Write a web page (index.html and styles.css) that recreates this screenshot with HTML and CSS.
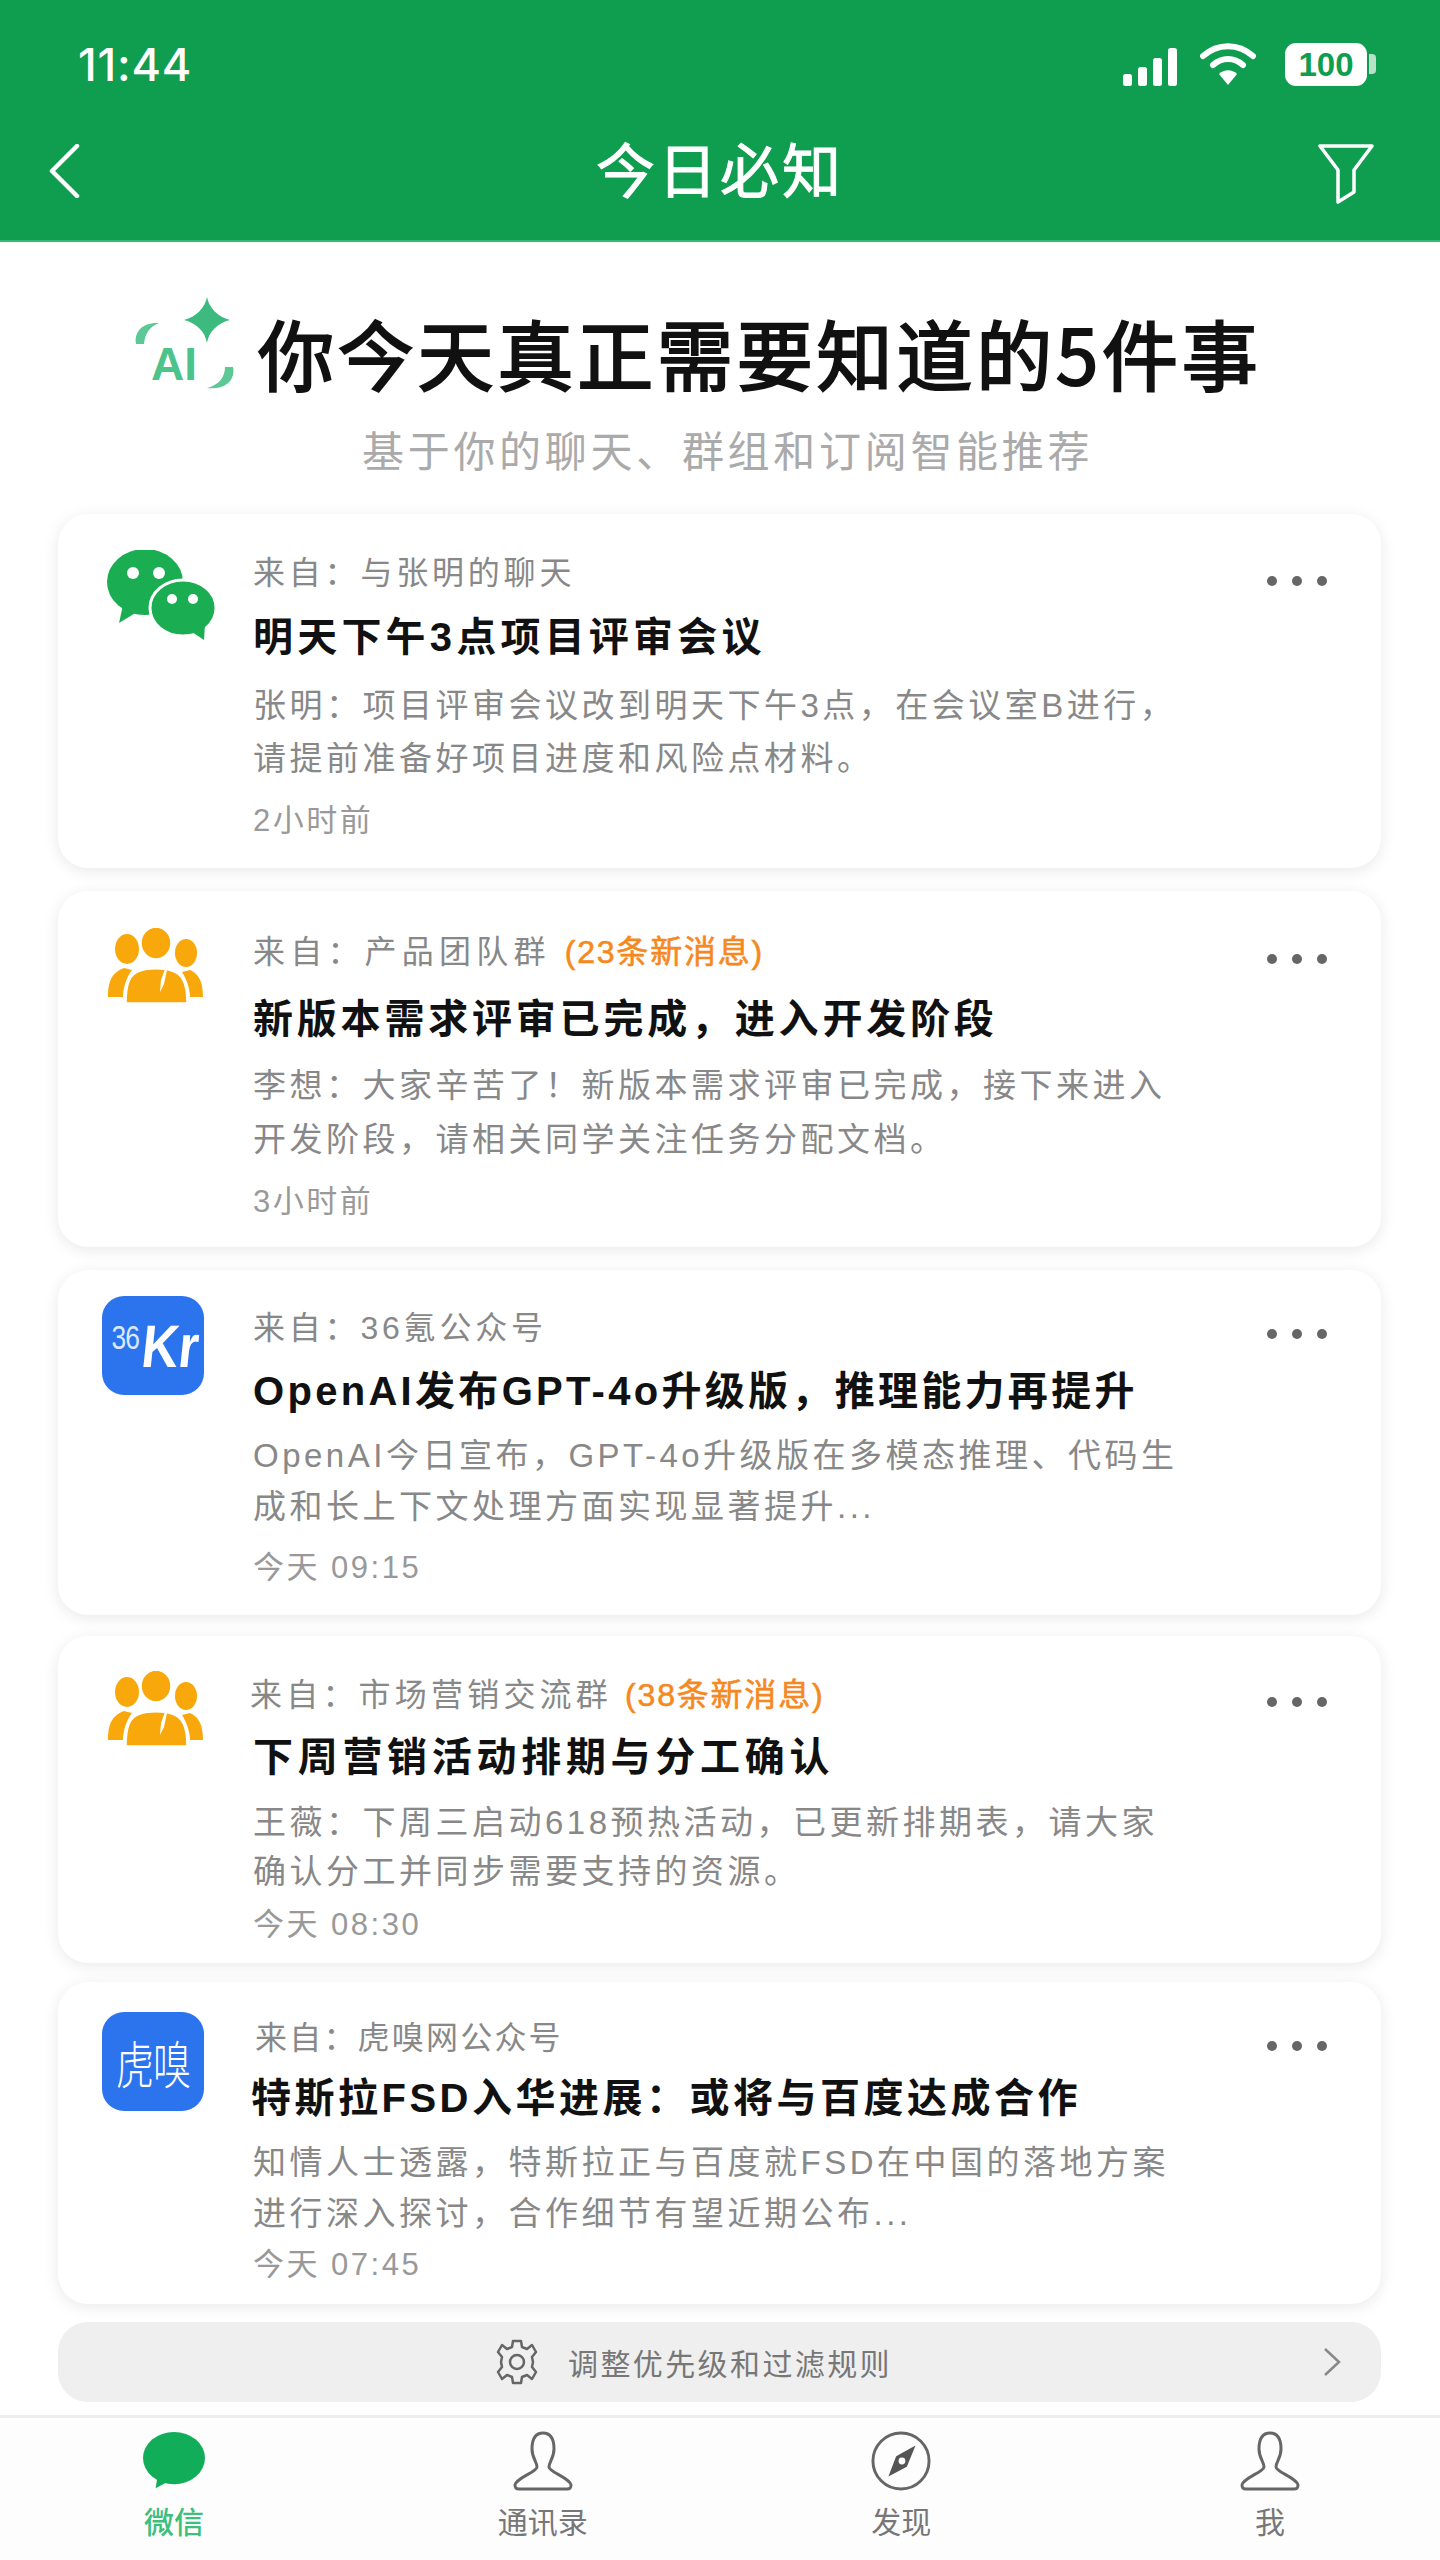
FILE: index.html
```html
<!DOCTYPE html>
<html lang="zh-CN">
<head>
    <meta charset="UTF-8">
    <meta name="viewport" content="width=device-width, initial-scale=1.0">
    <title>今日必知</title>
    <link rel="stylesheet" href="styles.css">
</head>
<body>
    <div class="app">
        <header class="top">
            <div class="status">
                <span class="clock">11:44</span>
                <div class="status-icons">
                    <svg class="signal" viewBox="0 0 56 38"><rect x="0" y="26" width="9" height="12" rx="2.5"/><rect x="15" y="19" width="9" height="19" rx="2.5"/><rect x="30" y="10" width="9" height="28" rx="2.5"/><rect x="45" y="0" width="9" height="38" rx="2.5"/></svg>
                    <svg class="wifi" viewBox="0 0 56 42"><path d="M3 13C18 0 38 0 53 13" fill="none" stroke="#fff" stroke-width="6" stroke-linecap="round"/><path d="M13 22C22 14 34 14 43 22" fill="none" stroke="#fff" stroke-width="6" stroke-linecap="round"/><path d="M28 42L19 31C24 26 32 26 37 31Z" fill="#fff"/></svg>
                    <div class="battery"><span class="battery-level">100</span><span class="battery-nub"></span></div>
                </div>
            </div>
            <nav class="nav">
                <svg class="nav-back" viewBox="0 0 32 54"><path d="M29 2L4 27L29 52" fill="none" stroke="#fff" stroke-width="4.5" stroke-linecap="round" stroke-linejoin="round"/></svg>
                <h1 class="nav-title">今日必知</h1>
                <svg class="nav-filter" viewBox="0 0 56 60"><path d="M2 2H54L36 26V48L20 58V26Z" fill="none" stroke="#fff" stroke-width="3.5" stroke-linejoin="round"/></svg>
            </nav>
        </header>

        <main class="feed">
            <div class="intro">
                <div class="headline">
                    <svg class="ai-mark" viewBox="0 0 100 92">
                        <path d="M73 0C75 11 84 20 96 23C84 26 75 34 73 46C71 34 62 26 50 23C62 20 71 11 73 0Z" fill="#3dbb7e"/>
                        <path d="M2 47C0 34 9 25 25 26C15 30 11 37 10 47Z" fill="#5cc896"/>
                        <path d="M99 70C102 84 90 93 73 91C85 88 91 80 91 70Z" fill="#5cc896"/>
                        <text x="17" y="83" class="ai-text">AI</text>
                    </svg>
                    <h2 class="headline-text">你今天真正需要知道的5件事</h2>
                </div>
                <p class="subhead">基于你的聊天、群组和订阅智能推荐</p>
            </div>

            <article class="card card-one">
                <div class="card-icon">
                    <svg class="icon-wechat" viewBox="0 0 110 90">
                        <path d="M14 73L18 55L32 62Z" fill="#1aad52"/>
                        <ellipse cx="40" cy="32" rx="38" ry="33" fill="#1aad52"/>
                        <circle cx="28" cy="23" r="6" fill="#fff"/>
                        <circle cx="54" cy="23" r="6" fill="#fff"/>
                        <ellipse cx="78" cy="58" rx="33" ry="28" fill="#1aad52" stroke="#fff" stroke-width="3"/>
                        <path d="M99 90L87 82L100 74Z" fill="#1aad52"/>
                        <circle cx="67" cy="49" r="5" fill="#fff"/>
                        <circle cx="88" cy="49" r="5" fill="#fff"/>
                    </svg>
                </div>
                <div class="card-body">
                    <div class="card-from">来自&#xFF1A;与张明的聊天</div>
                    <h3 class="card-title">明天下午3点项目评审会议</h3>
                    <p class="card-text">张明&#xFF1A;项目评审会议改到明天下午3点&#xFF0C;在会议室B进行&#xFF0C;<br>请提前准备好项目进度和风险点材料。</p>
                    <div class="card-time">2小时前</div>
                </div>
                <div class="card-more"><i></i><i></i><i></i></div>
            </article>

            <article class="card card-two">
                <div class="card-icon">
                    <svg class="icon-group" viewBox="0 0 95 75">
                        <ellipse cx="19" cy="21" rx="12" ry="15" fill="#f9a80c"/>
                        <ellipse cx="78" cy="25" rx="11" ry="14" fill="#f9a80c"/>
                        <path d="M0 69C0 50 6 44 16 40L24 42C18 50 15 60 15 69Z" fill="#f9a80c"/>
                        <path d="M95 69C95 52 90 46 82 42L74 44C78 50 82 60 82 69Z" fill="#f9a80c"/>
                        <ellipse cx="48" cy="15" rx="15" ry="16" fill="#f9a80c" stroke="#fff" stroke-width="1.5"/>
                        <path d="M18 75C18 55 22 46 32 43C40 40 56 40 64 43C74 46 79 55 79 75Z" fill="#f9a80c" stroke="#fff" stroke-width="1.5"/>
                        <path d="M57 41L53 52L52 64L56 56L59 42Z" fill="#fff"/>
                    </svg>
                </div>
                <div class="card-body">
                    <div class="card-from">来自&#xFF1A;产品团队群 <span class="card-new">(23条新消息)</span></div>
                    <h3 class="card-title">新版本需求评审已完成&#xFF0C;进入开发阶段</h3>
                    <p class="card-text">李想&#xFF1A;大家辛苦了&#xFF01;新版本需求评审已完成&#xFF0C;接下来进入<br>开发阶段&#xFF0C;请相关同学关注任务分配文档。</p>
                    <div class="card-time">3小时前</div>
                </div>
                <div class="card-more"><i></i><i></i><i></i></div>
            </article>

            <article class="card card-three">
                <div class="card-icon">
                    <div class="logo logo-kr"><span class="kr-num">36</span><span class="kr-name">Kr</span></div>
                </div>
                <div class="card-body">
                    <div class="card-from">来自&#xFF1A;36氪公众号</div>
                    <h3 class="card-title">OpenAI发布GPT-4o升级版&#xFF0C;推理能力再提升</h3>
                    <p class="card-text">OpenAI今日宣布&#xFF0C;GPT-4o升级版在多模态推理、代码生<br>成和长上下文处理方面实现显著提升...</p>
                    <div class="card-time">今天 09:15</div>
                </div>
                <div class="card-more"><i></i><i></i><i></i></div>
            </article>

            <article class="card card-four">
                <div class="card-icon">
                    <svg class="icon-group" viewBox="0 0 95 75">
                        <ellipse cx="19" cy="21" rx="12" ry="15" fill="#f9a80c"/>
                        <ellipse cx="78" cy="25" rx="11" ry="14" fill="#f9a80c"/>
                        <path d="M0 69C0 50 6 44 16 40L24 42C18 50 15 60 15 69Z" fill="#f9a80c"/>
                        <path d="M95 69C95 52 90 46 82 42L74 44C78 50 82 60 82 69Z" fill="#f9a80c"/>
                        <ellipse cx="48" cy="15" rx="15" ry="16" fill="#f9a80c" stroke="#fff" stroke-width="1.5"/>
                        <path d="M18 75C18 55 22 46 32 43C40 40 56 40 64 43C74 46 79 55 79 75Z" fill="#f9a80c" stroke="#fff" stroke-width="1.5"/>
                        <path d="M57 41L53 52L52 64L56 56L59 42Z" fill="#fff"/>
                    </svg>
                </div>
                <div class="card-body">
                    <div class="card-from">来自&#xFF1A;市场营销交流群 <span class="card-new">(38条新消息)</span></div>
                    <h3 class="card-title">下周营销活动排期与分工确认</h3>
                    <p class="card-text">王薇&#xFF1A;下周三启动618预热活动&#xFF0C;已更新排期表&#xFF0C;请大家<br>确认分工并同步需要支持的资源。</p>
                    <div class="card-time">今天 08:30</div>
                </div>
                <div class="card-more"><i></i><i></i><i></i></div>
            </article>

            <article class="card card-five">
                <div class="card-icon">
                    <div class="logo logo-hx"><span>虎嗅</span></div>
                </div>
                <div class="card-body">
                    <div class="card-from">来自&#xFF1A;虎嗅网公众号</div>
                    <h3 class="card-title">特斯拉FSD入华进展&#xFF1A;或将与百度达成合作</h3>
                    <p class="card-text">知情人士透露&#xFF0C;特斯拉正与百度就FSD在中国的落地方案<br>进行深入探讨&#xFF0C;合作细节有望近期公布...</p>
                    <div class="card-time">今天 07:45</div>
                </div>
                <div class="card-more"><i></i><i></i><i></i></div>
            </article>

            <div class="adjust">
                <svg class="adjust-gear" viewBox="0 0 46 46">
                    <path d="M19 2H27L28 8L33 10L38 6L42 13L38 18L39 23L38 28L42 33L38 40L33 36L28 38L27 44H19L18 38L13 36L8 40L4 33L8 28L7 23L8 18L4 13L8 6L13 10L18 8Z" fill="none" stroke="#666" stroke-width="2.5" stroke-linejoin="round"/>
                    <circle cx="23" cy="23" r="7" fill="none" stroke="#666" stroke-width="2.5"/>
                </svg>
                <span class="adjust-text">调整优先级和过滤规则</span>
                <svg class="adjust-arrow" viewBox="0 0 18 30"><path d="M2 2L16 15L2 28" fill="none" stroke="#888" stroke-width="2.5"/></svg>
            </div>
        </main>

        <footer class="tabs">
            <div class="tab tab-active">
                <svg class="tab-icon" viewBox="0 0 64 60"><path d="M13 58L15 46L28 50Z" fill="#11ad59"/><ellipse cx="32" cy="27" rx="32" ry="27" fill="#11ad59"/></svg>
                <span>微信</span>
            </div>
            <div class="tab">
                <svg class="tab-icon" viewBox="0 0 62 60"><path d="M31 2C23 2 20 9 20 18C20 27 25 31 25 36C25 41 4 47 3 54C3 57 4 58 7 58H55C58 58 59 57 59 54C58 47 37 41 37 36C37 31 42 27 42 18C42 9 39 2 31 2Z" fill="none" stroke="#666" stroke-width="3"/></svg>
                <span>通讯录</span>
            </div>
            <div class="tab tab-discover">
                <svg class="tab-icon" viewBox="0 0 62 62"><circle cx="31" cy="31" r="29" fill="none" stroke="#666" stroke-width="3"/><path d="M46 15L37 37L18 47L26 26Z" fill="#555"/><circle cx="32" cy="31" r="3.5" fill="#fff"/></svg>
                <span>发现</span>
            </div>
            <div class="tab">
                <svg class="tab-icon" viewBox="0 0 62 60"><path d="M31 2C23 2 20 9 20 18C20 27 25 31 25 36C25 41 4 47 3 54C3 57 4 58 7 58H55C58 58 59 57 59 54C58 47 37 41 37 36C37 31 42 27 42 18C42 9 39 2 31 2Z" fill="none" stroke="#666" stroke-width="3"/></svg>
                <span>我</span>
            </div>
        </footer>
    </div>
</body>
</html>
```

FILE: styles.css
```css
* {
    box-sizing: border-box;
}

body {
    margin: 0;
    background-color: #fff;
    font-family: "Liberation Sans", "Noto Sans CJK SC", sans-serif;
}

h1, h2, h3, p {
    margin: 0;
}

.app {
    width: 1440px;
    height: 2560px;
    display: flex;
    flex-direction: column;
    overflow: hidden;
}

/* green header */
.top {
    height: 242px;
    background-color: #0f9d4f;
    border-bottom: 2px solid #35bb70;
    color: #fff;
}

.status {
    height: 132px;
    padding: 42px 64px 0 78px;
    display: flex;
    justify-content: space-between;
    align-items: flex-start;
}

.clock {
    font-family: Inter, "Liberation Sans", sans-serif;
    font-size: 45px;
    line-height: 46px;
    font-weight: 500;
    letter-spacing: 0.8px;
}

.status-icons {
    display: flex;
    align-items: center;
    gap: 29px;
}

.signal {
    width: 56px;
    height: 38px;
    fill: #fff;
    margin-top: 6px;
    margin-right: -8px;
}

.wifi {
    width: 56px;
    height: 42px;
}

.battery {
    display: flex;
    align-items: center;
    gap: 2px;
}

.battery-level {
    width: 82px;
    height: 43px;
    background-color: #fff;
    border-radius: 11px;
    color: #0f9d4f;
    font-size: 33px;
    font-weight: 700;
    line-height: 43px;
    text-align: center;
}

.battery-nub {
    width: 7px;
    height: 20px;
    background-color: #b7e2c8;
    border-radius: 0 4px 4px 0;
}

.nav {
    padding-top: 12px;
    display: grid;
    grid-template-columns: 1fr auto 1fr;
    align-items: start;
}

.nav-back {
    width: 32px;
    height: 54px;
    margin-left: 48px;
}

.nav-title {
    font-size: 59px;
    line-height: 58px;
    font-weight: 400;
    letter-spacing: 3px;
    -webkit-text-stroke: 1px #fff;
}

.nav-filter {
    width: 56px;
    height: 60px;
    justify-self: end;
    margin-right: 66px;
}

/* list */
.feed {
    flex: 1;
    padding: 0 59px 0 58px;
}

.intro {
    height: 272px;
    padding-top: 55px;
}

.headline {
    display: flex;
    align-items: flex-start;
    padding-left: 76px;
}

.ai-mark {
    width: 100px;
    height: 92px;
    flex-shrink: 0;
}

.ai-text {
    font-family: "Liberation Sans", sans-serif;
    font-size: 46px;
    font-weight: 700;
    fill: #4cc38a;
}

.headline-text {
    margin-top: 10px;
    margin-left: 24px;
    font-family: "Noto Sans CJK SC", sans-serif;
    font-size: 76px;
    line-height: 90px;
    font-weight: 400;
    letter-spacing: 3.8px;
    color: #111;
    -webkit-text-stroke: 2.2px #111;
    white-space: nowrap;
}

.subhead {
    margin-top: 31px;
    padding-left: 304px;
    font-size: 42px;
    line-height: 50px;
    letter-spacing: 3.7px;
    color: #aaa;
    white-space: nowrap;
}

.card {
    position: relative;
    display: flex;
    background-color: #fff;
    border-radius: 30px;
    box-shadow: 0 3px 16px rgba(0, 0, 0, 0.09);
    padding-top: var(--top);
    padding-bottom: var(--bottom);
    margin-bottom: var(--after);
}

.card-one { --top: 39px; --from-ls: 3.8px; --title-gap: 19px; --title-ls: 4.2px; --text-gap: 16.5px; --line: 53px; --time-gap: 16.5px; --bottom: 27px; --after: 23px; --more: 62px; }
.card-two { --top: 41px; --from-ls: 5.2px; --title-gap: 22px; --title-ls: 3.8px; --text-gap: 15px; --line: 54px; --time-gap: 15px; --bottom: 25px; --after: 23px; --more: 63px; }
.card-three { --top: 38px; --from-ls: 3.8px; --title-gap: 18px; --title-ls: 3.3px; --text-gap: 13.5px; --line: 51px; --time-gap: 16.5px; --bottom: 27px; --after: 21px; --more: 59px; }
.card-four { --top: 39px; --from-ls: 4.2px; --title-gap: 17px; --title-ls: 4.7px; --text-gap: 15.5px; --line: 49px; --time-gap: 9.5px; --bottom: 18px; --after: 19px; --more: 61px; }
.card-five { --top: 36px; --from-ls: 2.2px; --title-gap: 15px; --title-ls: 3.5px; --text-gap: 13.5px; --line: 51px; --time-gap: 6.5px; --bottom: 19px; --after: 18px; --more: 59px; }

.card-icon {
    width: 195px;
    flex-shrink: 0;
}

.icon-wechat {
    display: block;
    width: 110px;
    height: 90px;
    margin: -3px 0 0 47px;
}

.icon-group {
    display: block;
    width: 95px;
    height: 75px;
    margin: -4px 0 0 50px;
}

.logo {
    width: 102px;
    height: 99px;
    margin-left: 44px;
    margin-top: -12px;
    background-color: #2b74ee;
    border-radius: 22px;
    color: #fff;
}

.logo-kr {
    display: flex;
    justify-content: center;
    align-items: flex-start;
    padding-top: 29px;
}

.kr-num {
    font-size: 33px;
    line-height: 25px;
    letter-spacing: -1px;
    transform: scaleX(0.8);
    margin-right: -3px;
    color: #dbe8ff;
}

.kr-name {
    font-size: 60px;
    line-height: 44px;
    font-weight: 700;
    transform: skewX(-6deg) scaleX(0.85);
    margin-left: -3px;
    margin-right: -6px;
}

.logo-hx {
    margin-top: -6px;
    display: flex;
    justify-content: center;
    align-items: center;
    font-size: 38px;
    font-weight: 300;
    letter-spacing: -1px;
}

.logo-hx span {
    transform: scaleY(1.35);
}

.card-body {
    flex: 1;
    min-width: 0;
}

.card-from {
    font-size: 32px;
    line-height: 40px;
    letter-spacing: var(--from-ls);
    color: #888;
    white-space: nowrap;
}

.card-four .card-from {
    margin-left: -3px;
}

.card-five .card-from {
    margin-left: 2px;
}

.card-five .card-title {
    margin-left: -2px;
}

.card-new {
    color: #f5891f;
    -webkit-text-stroke: 0.6px #f5891f;
    letter-spacing: 1.8px;
}

.card-title {
    margin-top: var(--title-gap);
    font-size: 40px;
    line-height: 50px;
    font-weight: 700;
    letter-spacing: var(--title-ls);
    color: #111;
    white-space: nowrap;
}

.card-text {
    margin-top: var(--text-gap);
    font-size: 33px;
    line-height: var(--line);
    letter-spacing: 3.5px;
    color: #888;
    white-space: nowrap;
}

.card-time {
    margin-top: var(--time-gap);
    font-size: 31px;
    line-height: 40px;
    letter-spacing: 2.5px;
    color: #999;
}

/* three dots sit over the card corner */
.card-more {
    position: absolute;
    top: var(--more);
    right: 54px;
    display: flex;
    gap: 15px;
}

.card-more i {
    width: 10px;
    height: 10px;
    border-radius: 50%;
    background-color: #666;
}

.adjust {
    height: 80px;
    background-color: #efefef;
    border-radius: 30px;
    display: flex;
    align-items: center;
    padding-left: 436px;
}

.adjust-gear {
    width: 46px;
    height: 46px;
    flex-shrink: 0;
}

.adjust-text {
    margin-left: 28px;
    font-size: 30px;
    letter-spacing: 2.4px;
    color: #777;
}

.adjust-arrow {
    width: 18px;
    height: 30px;
    margin-left: auto;
    margin-right: 40px;
}

/* bottom tabs */
.tabs {
    height: 145px;
    border-top: 3px solid #eee;
    background-color: #fdfdfd;
    padding: 13px 110px 0 114px;
    display: flex;
    justify-content: space-between;
}

.tab {
    width: 120px;
    display: flex;
    flex-direction: column;
    align-items: center;
    font-size: 30px;
    line-height: 36px;
    color: #777;
}

.tab-discover {
    margin-left: -10px;
}

.tab-icon {
    width: 62px;
    height: 60px;
    margin-bottom: 14px;
}

.tab-active {
    color: #3fbf7c;
    font-weight: 500;
}
```
